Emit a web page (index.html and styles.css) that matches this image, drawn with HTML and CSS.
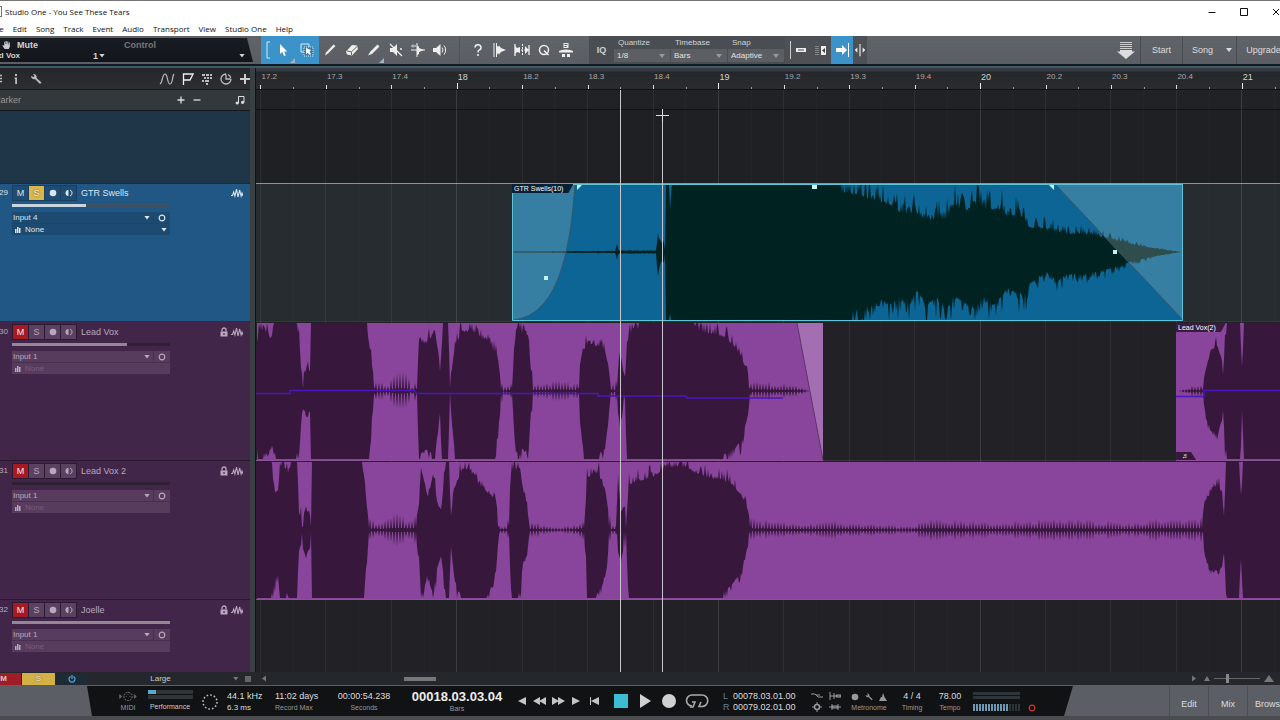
FILE: index.html
```html
<!DOCTYPE html>
<html lang="en">
<head>
    <meta charset="UTF-8">
    <meta name="viewport" content="width=device-width, initial-scale=1.0">
    <title>Studio One - You See These Tears</title>
    <link rel="stylesheet" href="styles.css">
</head>
<body>

    <!-- Shared icons -->
    <svg class="sprite" aria-hidden="true">
        <symbol id="wave" viewBox="0 0 12 10"><path d="M0 7.500h1.500L2.700 4l1.200 4L5.500 1 7 9l1.700-7 1.400 6 .9-3 1 3" fill="none" stroke="currentColor" stroke-width="1.100"/></symbol>
        <symbol id="lock" viewBox="0 0 8 10"><path d="M2 4.500V3a2 2 0 0 1 4 0v1.500" fill="none" stroke="currentColor" stroke-width="1.300"/><path d="M.5 4.500h7V9.500h-7zM3.400 6v2h1.200V6z" fill="currentColor" fill-rule="evenodd"/></symbol>
        <symbol id="dot" viewBox="0 0 8 8"><circle cx="4" cy="4" r="3.300" fill="currentColor"/></symbol>
        <symbol id="monitor" viewBox="0 0 8 8"><path d="M3.500 1v6a3 3 0 0 1 0-6z" fill="currentColor"/><path d="M5 1a3.200 3.200 0 0 1 0 6" fill="none" stroke="currentColor"/></symbol>
        <symbol id="ring" viewBox="0 0 8 8"><circle cx="4" cy="4" r="2.800" fill="none" stroke="currentColor" stroke-width="1.200"/></symbol>
        <symbol id="keys" viewBox="0 0 6 6"><path d="M0 2h1.500v4H0zM2 0h1.500v6H2zM4 1h1.500v5H4z" fill="currentColor"/></symbol>
        <symbol id="wrench" viewBox="0 0 12 12"><path d="M1 3a3 3 0 0 0 4 3l5 5 1.500-1.500-5-4.500A3 3 0 0 0 3 1l1.500 2L3.500 4z" fill="currentColor"/></symbol>
    </svg>

    <header class="titlebar">
        <span class="app-mark"></span>
        <h1>Studio One - You See These Tears</h1>
        <div class="window-buttons">
            <button aria-label="Minimize"><svg viewBox="0 0 8 8"><path d="M0.500 4.500h7"/></svg></button>
            <button aria-label="Maximize"><svg viewBox="0 0 8 8"><path d="M.5 .5h7v7h-7z"/></svg></button>
            <button aria-label="Close"><svg viewBox="0 0 8 8"><path d="M1 1l6 6M7 1L1 7"/></svg></button>
        </div>
    </header>

    <nav class="menu">
        <a href="#">File</a>
        <a href="#">Edit</a>
        <a href="#">Song</a>
        <a href="#">Track</a>
        <a href="#">Event</a>
        <a href="#">Audio</a>
        <a href="#">Transport</a>
        <a href="#">View</a>
        <a href="#">Studio One</a>
        <a href="#">Help</a>
    </nav>

    <!-- Toolbar -->
    <div class="toolbar">
        <div class="param">
            <div class="param-row">
                <svg class="hand" viewBox="0 0 10 10"><path d="M3 9.500L.3 5.500l.9-.6L2.500 6V1.500h1V4h.5V.5h1.200V4h.6V1H7v3.500h.5V2.200h1.200V7L7.500 9.500z" fill="#ccc"/></svg>
                <b>Mute</b>
                <span class="control">Control</span>
            </div>
            <div class="param-row">
                <b class="target">Lead Vox</b>
                <b class="channel">1</b><i class="tri"></i>
                <i class="tri end"></i>
            </div>
        </div>

        <div class="tools arrow-tools">
            <svg class="bracket" viewBox="0 0 5 18"><path d="M4 1H1v16h3" fill="none" stroke="#cfe9f5"/></svg>
            <button aria-label="Arrow"><svg viewBox="0 0 16 16"><path d="M5 2v10l2.300-2 1.700 4 1.800-.8L9.200 9.500h3z" fill="#fff"/></svg></button>
            <button aria-label="Range"><svg viewBox="0 0 16 16"><path d="M2 2h8v8H2z" fill="none" stroke="#d6edf8"/><path d="M5 5h9v9H5z" fill="#3b7ba3" stroke="#d6edf8" stroke-dasharray="1 1"/><path d="M7 6v6l1.500-1L11 13l1-1.500-1.500-1.500L12 8z" fill="#fff"/></svg></button>
            <i class="corner"></i>
        </div>

        <div class="tools">
            <button aria-label="Split"><svg viewBox="0 0 16 16"><path d="M3 13.500l1-3 7.500-8 2 1.500-7.500 7.500z" fill="#eee"/></svg></button>
            <button aria-label="Eraser"><svg viewBox="0 0 16 16"><path d="M2 9.500l6-6.500 5 .5 1 3.500-6 6.500-5-1z" fill="#eee"/><path d="M3 9l4.500.8 5.500-5.300M7.500 10v3" fill="none" stroke="#666"/></svg></button>
            <button aria-label="Paint"><svg viewBox="0 0 16 16"><path d="M2 13.500l2-3.500 7.500-7.500 2 2L6 12z" fill="#eee"/></svg><i class="corner"></i></button>
            <button aria-label="Mute tool"><svg viewBox="0 0 16 16"><path d="M2 6h3l4-4v12l-4-4H2z" fill="#eee"/><path d="M2 2l12 12M12 7h2" stroke="#eee" stroke-width="1.300"/></svg></button>
            <button aria-label="Bend"><svg viewBox="0 0 16 16"><path d="M7 1v14M1 8h14M3 4h3M3 2.500L1.500 4 3 5.500" fill="none" stroke="#eee"/><path d="M7 3l2 2v1l5 2-5 2v2l-2 1z" fill="#eee"/></svg></button>
            <button aria-label="Listen"><svg viewBox="0 0 16 16"><path d="M1 6h3l4.500-4v12L4 10H1z" fill="#eee"/><path d="M10 5.500a4 4 0 0 1 0 5M12 3.500a7 7 0 0 1 0 9" fill="none" stroke="#eee"/></svg></button>
        </div>

        <div class="tools helpers">
            <button aria-label="Help"><svg viewBox="0 0 16 16"><path d="M5 5.500a3 2.800 0 1 1 4 2.600Q8 8.700 8 10.500M8 12v2" fill="none" stroke="#eee" stroke-width="1.500"/></svg></button>
            <button aria-label="Strip silence"><svg viewBox="0 0 16 16"><path d="M2 1v14M4.500 1v14" stroke="#eee"/><path d="M4 2l2 3 1-1.500 2 2.500 5 2-5 2-2 2.500L6 11l-2 3z" fill="#eee"/></svg></button>
            <button aria-label="Transient"><svg viewBox="0 0 16 16"><path d="M1 2v12M15 3v10" stroke="#eee" stroke-width="1.300"/><path d="M1 4l2 2 3-1v6l-3-1-2 2zM15 8l-4-4v8z" fill="#eee"/><path d="M8.500 2v12M1 8h14" stroke="#eee" stroke-dasharray="2 1"/></svg></button>
            <button aria-label="Quantize"><svg viewBox="0 0 16 16"><circle cx="8" cy="8" r="4.500" fill="none" stroke="#eee" stroke-width="1.500"/><path d="M8 8.500l4.500 4.500" stroke="#eee" stroke-width="1.500"/></svg></button>
            <button aria-label="Macro"><svg viewBox="0 0 16 16"><path d="M5.500 1h5v5h-5z" fill="#eee"/><path d="M6.500 2.500h3M6.500 4.500h2" stroke="#555"/><path d="M1 10.500V9a8 3 0 0 1 14 0v1.500zM4 12h3v3H4zM9 12h3v3H9z" fill="#eee"/></svg></button>
        </div>

        <div class="snap">
            <button class="iq">IQ</button>
            <div class="field">
                <label for="quantize">Quantize</label>
                <div class="pick"><select id="quantize"><option>1/8</option></select></div>
            </div>
            <div class="field">
                <label for="timebase">Timebase</label>
                <div class="pick"><select id="timebase"><option>Bars</option></select></div>
            </div>
            <div class="field">
                <label for="snapmode">Snap</label>
                <div class="pick"><select id="snapmode"><option>Adaptive</option></select></div>
            </div>
        </div>

        <div class="tools autoscroll">
            <i class="bar"></i>
            <button aria-label="Grid line"><svg viewBox="0 0 16 16"><path d="M3 6h10v4H3z" fill="#eee"/><path d="M5 8h6" stroke="#444"/></svg></button>
            <button aria-label="Ripple"><svg viewBox="0 0 16 16"><path d="M3 4v9M5 4v9" stroke="#bbb" stroke-dasharray="1 1"/><path d="M8 4h5v9H8z" fill="#eee"/><path d="M12 6v5L9 8.500z" fill="#444"/></svg></button>
            <button class="on" aria-label="Autoscroll"><svg viewBox="0 0 16 16"><path d="M2 6h6V3l5 5-5 5v-3H2z" fill="#fff"/><path d="M14.500 1v14" stroke="#fff"/></svg></button>
            <button class="slim" aria-label="Cursor follows"><svg viewBox="0 0 16 16"><path d="M8 1v14" stroke="#eee" stroke-width="1.300"/><path d="M5 5v6L2 8zM11 5v6l3-3z" fill="#eee"/></svg></button>
        </div>

        <div class="pages">
            <button class="save" aria-label="Drop"><svg viewBox="0 0 18 17"><path d="M3 .5h12M3 2.500h12M3 4.500h12M3 6.500h12" stroke="#ccc"/><path d="M3 8h12v1.500h3L9 17 0 9.500h3z" fill="#ddd"/></svg></button>
            <button class="page">Start</button>
            <button class="page song">Song<i class="tri"></i></button>
            <button class="page upgrade">Upgrade</button>
        </div>
    </div>

    <main class="arrange">
        <section class="tracklist">
            <div class="list-tools">
                <svg class="menu-icon" viewBox="0 0 10 10"><path d="M0 1.500h10M0 4.500h10M0 7.500h10" stroke="#bbb" stroke-width="1.500"/></svg>
                <svg viewBox="0 0 12 12"><path d="M5 1h2v2H5zM4.500 4.500H7V11H5.200V6h-.7z" fill="#bbb"/></svg>
                <svg viewBox="0 0 12 12" color="#bbb"><use href="#wrench"/></svg>
                <div class="views">
                    <svg class="wide" viewBox="0 0 16 12"><path d="M1 11C4 9 3 1 6 1s2 10 5 10 2-8 4-10" fill="none" stroke="#bbb" stroke-width="1.200"/></svg>
                    <svg viewBox="0 0 12 12"><path d="M1.500 12V1H11L8 7H2" fill="none" stroke="#eee" stroke-width="1.300"/></svg>
                    <svg viewBox="0 0 12 12"><path d="M1 2h3M5 2h3M9 2h2M3 5h2M6 5h2M9 5h2M1 8h2M4 8h4M5 11h2" stroke="#bbb" stroke-width="2"/></svg>
                    <svg viewBox="0 0 12 12"><path d="M6 1a5 5 0 1 0 5 5M6 1.500V6h4.500M8 1.500A5 5 0 0 1 10.800 5" fill="none" stroke="#bbb" stroke-width="1.300"/></svg>
                    <svg viewBox="0 0 12 12"><path d="M6 1v10M1 6h10" stroke="#ccc" stroke-width="2"/></svg>
                </div>
            </div>
            <div class="marker-head">
                <span>Marker</span>
                <button aria-label="Add marker"><svg viewBox="0 0 8 8"><path d="M4 .5v7M.5 4h7" stroke="#ddd" stroke-width="1.300"/></svg></button>
                <button aria-label="Remove marker"><svg viewBox="0 0 8 8"><path d="M.5 4h7" stroke="#ddd" stroke-width="1.300"/></svg></button>
                <svg class="note" viewBox="0 0 10 10"><path d="M3.500 8V1.500H9V7" fill="none" stroke="#ddd"/><circle cx="2.200" cy="8" r="1.600" fill="#ddd"/><circle cx="7.600" cy="7.300" r="1.600" fill="#ddd"/></svg>
            </div>

            <div class="track-tail"></div>

            <article class="track blue">
                <span class="num">29</span>
                <div class="body">
                    <div class="head">
                        <div class="switches">
                            <button>M</button><button class="solo">S</button><button aria-label="Record"><svg viewBox="0 0 8 8"><use href="#dot"/></svg></button><button aria-label="Monitor"><svg viewBox="0 0 8 8"><use href="#monitor"/></svg></button>
                        </div>
                        <h2>GTR Swells</h2>
                        <svg class="wave-icon" viewBox="0 0 12 10"><use href="#wave"/></svg>
                    </div>
                    <div class="level"><i style="width: 47%"></i></div>
                    <div class="io">
                        <div class="io-row"><button class="source">Input 4<i class="tri"></i></button><button class="link" aria-label="Stereo"><svg viewBox="0 0 8 8"><use href="#ring"/></svg></button></div>
                        <button class="instrument"><svg viewBox="0 0 6 6"><use href="#keys"/></svg>None<i class="tri"></i></button>
                    </div>
                </div>
            </article>

            <article class="track purple">
                <span class="num">30</span>
                <div class="body">
                    <div class="head">
                        <div class="switches">
                            <button class="mute">M</button><button>S</button><button aria-label="Record"><svg viewBox="0 0 8 8"><use href="#dot"/></svg></button><button aria-label="Monitor"><svg viewBox="0 0 8 8"><use href="#monitor"/></svg></button>
                        </div>
                        <h2>Lead Vox</h2>
                        <svg class="lock-icon" viewBox="0 0 8 10"><use href="#lock"/></svg>
                        <svg class="wave-icon" viewBox="0 0 12 10"><use href="#wave"/></svg>
                    </div>
                    <div class="level"><i style="width: 73%"></i></div>
                    <div class="io">
                        <div class="io-row"><button class="source">Input 1<i class="tri"></i></button><button class="link" aria-label="Stereo"><svg viewBox="0 0 8 8"><use href="#ring"/></svg></button></div>
                        <button class="instrument"><svg viewBox="0 0 6 6"><use href="#keys"/></svg><span>None</span></button>
                    </div>
                </div>
            </article>

            <article class="track purple">
                <span class="num">31</span>
                <div class="body">
                    <div class="head">
                        <div class="switches">
                            <button class="mute">M</button><button>S</button><button aria-label="Record"><svg viewBox="0 0 8 8"><use href="#dot"/></svg></button><button aria-label="Monitor"><svg viewBox="0 0 8 8"><use href="#monitor"/></svg></button>
                        </div>
                        <h2>Lead Vox 2</h2>
                        <svg class="lock-icon" viewBox="0 0 8 10"><use href="#lock"/></svg>
                        <svg class="wave-icon" viewBox="0 0 12 10"><use href="#wave"/></svg>
                    </div>
                    <div class="level"><i style="width: 0%"></i></div>
                    <div class="io">
                        <div class="io-row"><button class="source">Input 1<i class="tri"></i></button><button class="link" aria-label="Stereo"><svg viewBox="0 0 8 8"><use href="#ring"/></svg></button></div>
                        <button class="instrument"><svg viewBox="0 0 6 6"><use href="#keys"/></svg><span>None</span></button>
                    </div>
                </div>
            </article>

            <article class="track purple">
                <span class="num">32</span>
                <div class="body">
                    <div class="head">
                        <div class="switches">
                            <button class="mute">M</button><button>S</button><button aria-label="Record"><svg viewBox="0 0 8 8"><use href="#dot"/></svg></button><button aria-label="Monitor"><svg viewBox="0 0 8 8"><use href="#monitor"/></svg></button>
                        </div>
                        <h2>Joelle</h2>
                        <svg class="lock-icon" viewBox="0 0 8 10"><use href="#lock"/></svg>
                        <svg class="wave-icon" viewBox="0 0 12 10"><use href="#wave"/></svg>
                    </div>
                    <div class="level"><i style="width: 100%"></i></div>
                    <div class="io">
                        <div class="io-row"><button class="source">Input 1<i class="tri"></i></button><button class="link" aria-label="Stereo"><svg viewBox="0 0 8 8"><use href="#ring"/></svg></button></div>
                        <button class="instrument"><svg viewBox="0 0 6 6"><use href="#keys"/></svg><span>None</span></button>
                    </div>
                </div>
            </article>
        </section>

        <div class="splitter"></div>

        <section class="timeline">
            <div class="ruler" id="ruler"></div>
            <div class="marker-lane"></div>
            <div class="lanes">
                <div class="lane tail-lane"></div>
                <div class="lane active"></div>
                <div class="lane"></div>
                <div class="lane"></div>
                <div class="lane"></div>
            </div>
            <svg class="grid" id="grid" viewBox="0 0 1024 582" preserveAspectRatio="none"></svg>
            <svg class="clips" id="clips" viewBox="0 0 1024 488" preserveAspectRatio="none"></svg>
            <span class="clip-name gtr">GTR Swells(10)</span>
            <span class="clip-name vox">Lead Vox(2)</span>
            <span class="clip-tag">♬</span>
            <i class="playhead"></i>
            <i class="cursor-line"></i>
            <i class="crosshair"></i>
        </section>
    </main>

    <div class="bottom-bar">
        <button class="all-mute">M</button>
        <button class="all-solo">S</button>
        <button class="power" aria-label="Power"><svg viewBox="0 0 8 8"><path d="M2.500 1.500a3 3 0 1 0 3 0M4 0v4" fill="none" stroke="#4aa3dc" stroke-width="1.300"/></svg></button>
        <button class="size">Large<i class="tri"></i></button>
        <i class="list-icon"></i>
        <div class="scroll"><i class="tri left"></i><i class="thumb"></i><i class="tri right"></i></div>
        <div class="zoom"><i class="tri up small"></i><input type="range" aria-label="Zoom" value="28"><i class="tri up"></i></div>
    </div>

    <!-- Transport -->
    <footer class="transport">
        <div class="transport-main">
            <div class="cell midi"><svg viewBox="0 0 20 12"><circle cx="10" cy="6" r="4.500" fill="none" stroke="#888" stroke-dasharray="2 1"/><path d="M7.500 6h1M11.500 6h1M10 3.500v1M1 4v4l2-2zM17 4v4l2-2z" fill="#666" stroke="#666"/></svg><small>MIDI</small></div>
            <div class="cell perf"><div class="meter"><i style="width: 19%"></i></div><div class="meter"></div><small>Performance</small></div>
            <div class="cell dots"><svg viewBox="0 0 18 18"><circle cx="9" cy="9" r="7" fill="none" stroke="#bbb" stroke-width="1.600" stroke-dasharray="1.600 2.065"/></svg></div>
            <div class="cell rate"><span>44.1 kHz</span><span class="sub">6.3 ms</span></div>
            <div class="cell recmax"><span>11:02 days</span><small>Record Max</small></div>
            <div class="cell secs"><span>00:00:54.238</span><small>Seconds</small></div>
            <div class="cell bars"><strong>00018.03.03.04</strong><small>Bars</small></div>
            <div class="nav-keys">
                <button aria-label="Previous bar"><svg viewBox="0 0 14 10"><path d="M11 1v8L3 5z"/></svg></button>
                <button aria-label="Rewind"><svg viewBox="0 0 14 10"><path d="M7 1v8L0 5zM13 1v8L6 5z"/></svg></button>
                <button aria-label="Fast forward"><svg viewBox="0 0 14 10"><path d="M1 1v8l7-4zM7 1v8l7-4z"/></svg></button>
                <button aria-label="Next bar"><svg viewBox="0 0 14 10"><path d="M3 1v8l8-4z"/></svg></button>
                <button aria-label="Return to zero"><svg viewBox="0 0 14 10"><path d="M3 1h1v8H3zM12 1v8L4 5z"/></svg></button>
            </div>
            <div class="play-keys">
                <button aria-label="Stop"><i class="stop"></i></button>
                <button aria-label="Play"><svg viewBox="0 0 14 16"><path d="M2 1v14l11-7z"/></svg></button>
                <button aria-label="Record"><svg viewBox="0 0 16 16"><circle cx="8" cy="8" r="7"/></svg></button>
                <button class="loop" aria-label="Loop"><svg viewBox="0 0 24 16"><path d="M5 14h3l2-5H7M7 13A5.500 5.500 0 0 1 7 2h10a5.500 5.500 0 0 1 0 11.500h-3l2-4.500" fill="none" stroke="#aaa" stroke-width="1.600"/></svg></button>
            </div>
            <div class="locators">
                <span><b>L</b>00078.03.01.00</span>
                <span><b>R</b>00079.02.01.00</span>
            </div>
            <div class="punch">
                <svg viewBox="0 0 12 10"><path d="M0 3h4l3 3h5M5 4h4" /></svg>
                <svg viewBox="0 0 12 10"><path d="M1 1v8M1 5h11M5 2v6M7 4h5v2H7z"/></svg>
                <svg viewBox="0 0 12 10"><circle cx="6" cy="5" r="2.500" stroke-width="1.500"/><path d="M6 0v2M6 8v2M1 5h2M9 5h2"/></svg>
                <svg viewBox="0 0 12 10"><path d="M0 5h12M3 2v6M9 2v6M3 4h6v2H3z"/></svg>
            </div>
            <div class="cell metro">
                <div class="metro-icons"><svg viewBox="0 0 8 8"><use href="#dot"/></svg><svg viewBox="0 0 12 12"><use href="#wrench"/></svg><svg viewBox="0 0 8 8"><path d="M0 8l2-4h1L4 0l1.500 4L8 8z" fill="currentColor"/></svg></div>
                <small>Metronome</small>
            </div>
            <div class="cell timing"><span>4 / 4</span><small>Timing</small></div>
            <div class="cell tempo"><span>78.00</span><small>Tempo</small></div>
            <div class="cell out"><div class="meter"></div><div class="meter"></div><div class="segments"></div></div>
            <svg class="clip-light" viewBox="0 0 8 8"><use href="#ring"/></svg>
        </div>
        <div class="views-nav">
            <button>Edit</button>
            <button>Mix</button>
            <button class="browse">Browse</button>
        </div>
    </footer>

    <script src="script.js"></script>
</body>
</html>
```

FILE: styles.css
```css
* {
    box-sizing: border-box;
}

body {
    margin: 0;
    height: 100vh;
    display: flex;
    flex-direction: column;
    overflow: hidden;
    background-color: #1f2024;
    color: #d0d2d4;
    font-family: "Liberation Sans", Arial, sans-serif;
    font-size: 9px;
    line-height: 12px;
}

button,
select {
    font: inherit;
    color: inherit;
    background: none;
    border: none;
    border-radius: 0;
    padding: 0;
    margin: 0;
    appearance: none;
}

button {
    display: flex;
    align-items: center;
    justify-content: center;
}

svg {
    display: block;
    flex-shrink: 0;
}

.sprite {
    position: absolute;
    width: 0;
    height: 0;
}

/* Small triangle used by every drop-down */
.tri {
    width: 6px;
    height: 4px;
    flex-shrink: 0;
    background-color: currentColor;
    clip-path: polygon(0 0, 100% 0, 50% 100%);
}

.tri.left {
    width: 4px;
    height: 6px;
    clip-path: polygon(100% 0, 100% 100%, 0 50%);
}

.tri.right {
    width: 4px;
    height: 6px;
    clip-path: polygon(0 0, 100% 50%, 0 100%);
}

.tri.up {
    width: 10px;
    height: 7px;
    clip-path: polygon(50% 0, 100% 100%, 0 100%);
}

.tri.up.small {
    width: 6px;
    height: 5px;
}

/* Title bar and menu */
.titlebar {
    display: flex;
    align-items: center;
    height: 22px;
    flex-shrink: 0;
    background-color: #fff;
    border-top: 1px solid #777;
    color: #111;
}

.app-mark {
    width: 2px;
    height: 11px;
    margin-right: 3px;
    border: 1px solid #777;
    border-left: none;
}

.titlebar h1 {
    margin: 0;
    font: 8px/14px "Open Sans", sans-serif;
}

.window-buttons {
    display: flex;
    margin-left: auto;
    margin-right: -12px;
}

.window-buttons button {
    width: 32px;
    height: 20px;
}

.window-buttons svg {
    width: 8px;
    height: 8px;
    fill: none;
    stroke: #111;
}

.menu {
    display: flex;
    gap: 9px;
    height: 14px;
    flex-shrink: 0;
    margin-left: -9px;
    padding-bottom: 1px;
    background-color: #fff;
    font: 8px/13px "Open Sans", sans-serif;
}

.menu a {
    color: #111;
    text-decoration: none;
}

/* Toolbar */
.toolbar {
    display: flex;
    height: 32px;
    flex-shrink: 0;
    background: linear-gradient(#606368, #5a5e64);
    border-bottom: 2px solid #3a5a68;
    box-shadow: inset 0 -2px #16191d;
    padding-bottom: 2px;
}

.param {
    width: 253px;
    margin-right: 8px;
    height: 24px;
    margin-top: 2px;
    padding: 1px 8px 0 0;
    background: linear-gradient(#191c22, #12151a);
    clip-path: polygon(0 0, 247px 0, 100% 100%, 0 100%);
}

.param-row {
    display: flex;
    align-items: center;
    height: 11px;
}

.hand {
    width: 9px;
    height: 10px;
    margin: 0 6px 0 2px;
}

.control {
    margin-left: 86px;
    font-weight: bold;
    color: #777;
}

.target {
    width: 104px;
    margin-left: -15px;
    font-size: 8px;
}

.channel {
    width: 6px;
    margin-left: 4px;
}

.tri.end {
    margin-left: auto;
}

.tools {
    display: flex;
    position: relative;
}

.tools button {
    width: 22px;
    position: relative;
}

.tools button svg {
    width: 16px;
    height: 16px;
}

.arrow-tools {
    background-color: #3b93ca;
    padding: 0 0 0 5px;
    align-items: center;
}

.arrow-tools button {
    width: 24px;
}

.bracket {
    width: 5px;
    height: 18px;
}

.corner {
    position: absolute;
    right: 1px;
    bottom: 1px;
    width: 5px;
    height: 5px;
    background-color: #9fb4c0;
    clip-path: polygon(100% 0, 100% 100%, 0 100%);
}

.arrow-tools .corner {
    right: 24px;
}

.helpers {
    margin-left: 8px;
    padding: 0 12px 0 7px;
    border-left: 1px solid #505358;
}

.snap {
    display: flex;
    background-color: #4a4d51;
    font-size: 8px;
}

.iq {
    width: 25px;
    font-size: 9px;
    font-weight: bold;
}

.field {
    width: 56px;
    margin-right: 1px;
    padding-top: 1px;
}

.field label {
    display: block;
    padding-left: 4px;
}

.pick {
    position: relative;
    background-color: #5b5e62;
    height: 13px;
    padding-left: 3px;
}

.pick select {
    width: 100%;
    height: 13px;
    color: #e4e4e4;
}

.pick::after {
    content: "";
    position: absolute;
    right: 5px;
    top: 5px;
    width: 6px;
    height: 4px;
    background-color: #999;
    clip-path: polygon(0 0, 100% 0, 50% 100%);
}

.autoscroll {
    background-color: #4d5054;
    padding-left: 5px;
}

.autoscroll .bar {
    width: 1px;
    margin: 5px 0;
    background-color: #ccc;
}

.autoscroll button {
    width: 20px;
}

.autoscroll .on {
    width: 22px;
    background-color: #3b93ca;
}

.autoscroll .slim {
    width: 14px;
}

.autoscroll .slim svg {
    width: 14px;
}

.pages {
    display: flex;
    margin-left: auto;
    margin-right: -10px;
}

.pages button {
    color: #ddd;
}

.save {
    width: 28px;
}

.save svg {
    width: 18px;
    height: 17px;
}

.page {
    border-left: 1px solid #484b50;
    width: 42px;
}

.page.song {
    width: 54px;
    gap: 13px;
    padding-left: 5px;
}

.page.upgrade {
    width: 54px;
}

/* Arrangement */
.arrange {
    display: grid;
    grid-template-columns: 250px 6px 1fr;
    flex: 1;
    min-height: 0;
    overflow: hidden;
}

.tracklist {
    overflow: hidden;
}

.splitter {
    background-color: #394044;
    border-right: 1px solid #121316;
}

.list-tools {
    display: flex;
    align-items: center;
    gap: 8px;
    height: 22px;
    background: linear-gradient(#24262a, #2c2e32);
    border-bottom: 1px solid #15171a;
}

.list-tools svg {
    width: 12px;
    height: 12px;
}

.list-tools .menu-icon {
    width: 10px;
    margin-left: -8px;
}

.views {
    display: flex;
    gap: 7px;
    margin-left: auto;
    margin-right: -1px;
}

.list-tools .wide {
    width: 16px;
}

.marker-head {
    display: flex;
    align-items: center;
    height: 20px;
    gap: 8px;
    background-color: #33383c;
    color: #999;
    padding-right: 5px;
}

.marker-head span {
    margin-left: -7px;
    margin-right: auto;
}

.marker-head svg {
    width: 8px;
    height: 8px;
}

.marker-head .note {
    width: 10px;
    height: 10px;
    margin-left: 26px;
}

.track-tail {
    height: 74px;
    background-color: #1f3548;
    border-top: 1px solid #16191c;
    border-bottom: 1px solid #1a2a3a;
}

.track {
    display: flex;
    gap: 4px;
    height: 139px;
    padding-top: 2px;
    border-bottom: 1px solid #241a2b;
}

.blue {
    height: 138px;
    padding-top: 1px;
    background-color: #215784;
    color: #dce6ee;
    border-bottom-color: #1b3550;
}

.purple {
    background-color: #42264a;
    color: #b9a8bd;
}

.num {
    width: 8px;
    padding-top: 2px;
    display: flex;
    justify-content: flex-end;
    font-size: 8px;
}

.body {
    flex: 1;
}

.head {
    display: flex;
    align-items: center;
    padding-right: 7px;
    gap: 3px;
}

.head h2 {
    margin: 0 auto 0 1px;
    font-size: 9px;
    font-weight: normal;
}

.switches {
    display: flex;
    gap: 1px;
    padding: 1px;
    background-color: #1b3f60;
}

.switches button {
    width: 15px;
    height: 14px;
    background-color: #1f4c73;
    font-size: 9px;
}

.purple .switches {
    background-color: #2c1a33;
}

.purple .switches button {
    background-color: #5b4161;
}

.purple .switches .mute {
    background-color: #a71a24;
    color: #eee;
}

.switches .solo {
    background-color: #dcb64a;
    color: #f8f0da;
    text-shadow: 0 0 2px #5a4410;
}

.switches svg {
    width: 8px;
    height: 8px;
}

.lock-icon {
    width: 8px;
    height: 10px;
}

.wave-icon {
    width: 12px;
    height: 10px;
}

.level {
    width: 158px;
    height: 3px;
    margin: 3px 0 5px;
    background-color: #3c5163;
}

.level i {
    display: block;
    height: 3px;
    background-color: #c9d6e0;
}

.purple .level {
    background-color: #2d2132;
}

.purple .level i {
    background-color: #938796;
}

.io {
    width: 158px;
    background-color: #1d4a70;
}

.purple .io {
    background-color: #583c5e;
}

.io-row {
    display: flex;
    border-bottom: 1px solid #1f4467;
}

.purple .io-row {
    border-color: #492f50;
}

.io button {
    height: 11px;
    font-size: 8px;
    justify-content: flex-start;
}

.io .source {
    flex: 1;
    padding: 0 3px 0 1px;
    justify-content: space-between;
    border-right: 1px solid #1f4467;
}

.io .link {
    width: 16px;
    justify-content: center;
}

.purple .io .source {
    border-color: #492f50;
}

.link svg {
    width: 8px;
    height: 8px;
}

.io .instrument {
    width: 100%;
    padding: 0 3px;
    gap: 4px;
}

.instrument svg {
    width: 6px;
    height: 6px;
}

.instrument .tri {
    margin-left: auto;
}

.purple .instrument span {
    color: #765d7c;
}

/* Timeline */
.timeline {
    position: relative;
    overflow: hidden;
}

.ruler {
    position: relative;
    height: 22px;
    background: linear-gradient(#363a42 0, #363a42 3px, #25272b 4px, #2a2c30 100%);
    border-bottom: 1px solid #101113;
}

.ruler span {
    position: absolute;
    top: 3px;
    padding-left: 1px;
    font-size: 8px;
    color: #a6a8aa;
}

.ruler .bar-label {
    font-size: 9px;
    color: #d0d2d4;
}

.ruler i {
    position: absolute;
    bottom: 0;
    width: 1px;
    height: 2px;
    background-color: #999;
}

.ruler .beat-tick {
    height: 4px;
    background-color: #ddd;
}

.ruler .bar-tick {
    height: 6px;
    background-color: #eee;
}

.marker-lane {
    height: 20px;
    background-color: #202226;
    border-bottom: 1px solid #121214;
}

.lane {
    height: 139px;
    background-color: #222125;
    border-bottom: 1px solid #3a333e;
}

.tail-lane {
    height: 74px;
    background-color: #1f2024;
    border-bottom: 1px solid #8b9494;
}

.lane.active {
    height: 138px;
    background-color: #272c30;
}

.grid {
    position: absolute;
    left: 0;
    top: 22px;
    width: 100%;
    height: 582px;
}

.clips {
    position: absolute;
    left: 0;
    top: 115px;
    width: 100%;
    height: 488px;
}

.clip-name {
    position: absolute;
    height: 9px;
    padding: 0 10px 0 2px;
    font-size: 7px;
    line-height: 9px;
    color: #fff;
    clip-path: polygon(0 0, 100% 0, calc(100% - 5px) 100%, 0 100%);
}

.clip-name.gtr {
    left: 25%;
    top: 116px;
    background-color: #062038;
}

.clip-name.vox {
    left: 89.85%;
    top: 255px;
    background-color: #3a1b3f;
}

.clip-tag {
    position: absolute;
    left: 89.85%;
    top: 384px;
    width: 20px;
    height: 8px;
    padding-left: 6px;
    font-size: 7px;
    line-height: 8px;
    color: #fff;
    background-color: #38183d;
    clip-path: polygon(0 0, 75% 0, 100% 100%, 0 100%);
}

.playhead,
.cursor-line {
    position: absolute;
    bottom: 0;
    width: 1px;
    background-color: #c9c5cc;
}

.playhead {
    left: 35.55%;
    top: 22px;
}

.cursor-line {
    left: 39.65%;
    top: 47px;
}

.crosshair {
    position: absolute;
    left: 39.65%;
    top: 41px;
    width: 13px;
    height: 13px;
    margin-left: -6px;
    background: linear-gradient(#ddd, #ddd) center / 13px 1px no-repeat, linear-gradient(#ddd, #ddd) center / 1px 13px no-repeat;
}

/* Bar under the tracks */
.bottom-bar {
    display: flex;
    align-items: center;
    height: 14px;
    flex-shrink: 0;
    background-color: #24272b;
    border-bottom: 1px solid #4b6478;
    font-size: 8px;
    color: #ccc;
}

.bottom-bar button {
    height: 12px;
}

.all-mute {
    width: 21px;
    padding-right: 14px;
    background-color: #a01c26;
    font-weight: bold;
}

.bottom-bar .all-solo {
    width: 33px;
    margin-left: 1px;
    background-color: #d3b146;
    color: #f8f0da;
    text-shadow: 0 0 2px #5a4410;
}

.power {
    width: 33px;
    background-color: #1e2a34;
}

.power svg {
    width: 8px;
    height: 8px;
}

.bottom-bar .size {
    width: 151px;
    padding-left: 62px;
    gap: 62px;
}

.list-icon {
    width: 6px;
    height: 6px;
    margin: 0 11px 0 6px;
    background-color: #666;
}

.bottom-bar .tri {
    background-color: #777;
}

.scroll {
    display: flex;
    align-items: center;
    flex: 1;
}

.thumb {
    width: 32px;
    height: 4px;
    margin-left: 138px;
    margin-right: auto;
    background-color: #777;
}

.zoom {
    display: flex;
    align-items: center;
    gap: 4px;
    padding: 0 6px 0 8px;
}

.zoom input {
    width: 46px;
    height: 10px;
    margin: 0;
    appearance: none;
    background: linear-gradient(#666, #666) center / 100% 1px no-repeat;
}

.zoom input::-webkit-slider-thumb {
    appearance: none;
    width: 3px;
    height: 9px;
    background-color: #888;
}

/* Transport */
.transport {
    display: flex;
    height: 34px;
    flex-shrink: 0;
    background-color: #5b5f65;
    border-bottom: 4px solid #4a4c50;
    padding-left: 87px;
}

.transport-main {
    display: flex;
    align-items: center;
    gap: 8px;
    flex: 0 1 986px;
    padding: 0 36px 0 30px;
    background-color: #111214;
    clip-path: polygon(0 0, 100% 0, calc(100% - 9px) 100%, 5px 100%);
}

.cell {
    display: flex;
    flex-direction: column;
    align-items: center;
    flex-shrink: 0;
    padding-top: 2px;
    white-space: nowrap;
    color: #ddd;
    line-height: 11px;
}

.cell small {
    font-size: 7px;
    line-height: 11px;
    color: #999;
}

.midi {
    width: 22px;
}

.midi svg {
    width: 20px;
    height: 11px;
}

.meter {
    width: 45px;
    height: 4px;
    margin-bottom: 1px;
    background-color: #2f3438;
}

.meter i {
    display: block;
    height: 4px;
    background-color: #5aa9d0;
}

.perf {
    width: 46px;
    padding-top: 0;
}

.perf small {
    color: #ccc;
    margin-top: 1px;
}

.dots svg {
    width: 18px;
    height: 18px;
}

.rate {
    width: 40px;
    align-items: flex-start;
}

.rate .sub {
    font-size: 8px;
}

.recmax {
    width: 44px;
    align-items: flex-start;
}

.secs {
    width: 74px;
}

.bars {
    width: 96px;
}

.bars strong {
    font-size: 13px;
    line-height: 12px;
    color: #eee;
}

.nav-keys,
.play-keys {
    display: flex;
    align-items: center;
}

.nav-keys button {
    width: 18px;
    height: 16px;
}

.nav-keys svg {
    width: 14px;
    height: 10px;
    fill: #c4c4c4;
}

.play-keys {
    gap: 4px;
}

.play-keys button {
    width: 20px;
    height: 20px;
}

.play-keys svg {
    width: 16px;
    height: 16px;
    fill: #d0d0d0;
}

.stop {
    width: 14px;
    height: 14px;
    background-color: #3cbdd4;
}

.play-keys .loop {
    width: 28px;
}

.play-keys .loop svg {
    width: 24px;
}

.locators {
    width: 80px;
    padding: 2px 0 0 4px;
    display: flex;
    flex-direction: column;
    line-height: 11px;
    color: #ddd;
    white-space: nowrap;
}

.locators b {
    display: inline-block;
    width: 10px;
    font-weight: normal;
    color: #5f7f9c;
}

.punch {
    display: grid;
    grid-template-columns: 12px 12px;
    gap: 1px 6px;
    padding-left: 4px;
}

.punch svg {
    width: 12px;
    height: 10px;
    fill: none;
    stroke: #999;
}

.metro {
    width: 40px;
}

.metro-icons {
    display: flex;
    gap: 6px;
    height: 11px;
    align-items: center;
    color: #999;
}

.metro-icons svg {
    width: 8px;
    height: 8px;
}

.timing {
    width: 30px;
}

.tempo {
    width: 30px;
}

.out {
    width: 47px;
    padding-top: 0;
}

.out .meter {
    width: 47px;
    height: 3px;
}

.segments {
    width: 47px;
    height: 7px;
    margin-top: 4px;
    background: repeating-linear-gradient(90deg, transparent 0, transparent 2px, #111214 2px, #111214 3px), linear-gradient(90deg, #6d9ab2 36px, #2f3438 36px);
}

.clip-light {
    width: 8px;
    height: 8px;
    color: #d4372c;
    align-self: flex-end;
    margin-bottom: 4px;
}

.views-nav {
    display: flex;
    margin-left: auto;
    margin-right: -8px;
    color: #ddd;
}

.views-nav button {
    width: 39px;
    border-left: 1px solid #4b4f55;
    padding-top: 6px;
}

.views-nav .browse {
    width: 41px;
    padding-left: 4px;
}
```

FILE: script.js
```js
const WIDTH = 1024;
const BEAT = 65.42;
const FIRST = 4.5;

// Ruler and grid
const ruler = document.getElementById("ruler");
let gridLines = "";

for (let n = 0; FIRST + n * BEAT / 2 < WIDTH; n++) {
    const x = FIRST + n * BEAT / 2;
    const left = (x / WIDTH * 100) + "%";
    const tick = document.createElement("i");
    tick.style.left = left;

    if (n % 2 === 0) {
        const beat = n / 2 + 1;
        const isBar = beat % 4 === 0;
        const label = document.createElement("span");
        label.textContent = 17 + Math.floor(beat / 4) + (isBar ? "" : "." + (beat % 4 + 1));
        label.style.left = left;
        tick.className = "beat-tick";
        if (isBar) {
            label.className = "bar-label";
            tick.className = "bar-tick";
        }
        ruler.appendChild(label);
    }
    ruler.appendChild(tick);
    const opacity = n % 8 === 6 ? 0.12 : n % 2 === 0 ? 0.06 : 0.02;
    gridLines += `<path d="M${Math.floor(x) + 0.5} 0V582" stroke="#fff" stroke-opacity="${opacity}"/>`;
}
document.getElementById("grid").innerHTML = gridLines;

// Envelopes: x, upper level, lower level
const lead1 = [
    0,.65,.77, 3,.97,1, 12,.9,.95, 16,.75,.85, 20,1,1, 40,1,1, 43,.85,.9, 45,.35,.45, 47,.14,.25, 51,.4,.35, 54,.3,.3, 55,1,1,
    110,1,1, 113,.75,1, 116,.4,.4, 118,.2,.2, 120,.08,.08, 133,.06,.06, 140,.15,.15, 150,.15,.14, 156,.05,.05, 161,.15,.2,
    163,.78,1, 170,.72,.9, 179,.93,1, 182,.6,.6, 184,.3,.35, 186,.75,.9, 188,1,1, 192,1,1, 194,.2,.1, 196,.35,.5, 199,.7,1,
    206,.92,1, 215,.93,1, 222,.88,1, 233,.68,1, 239,.6,1, 242,.5,.6, 245,.12,.2, 247,.03,.03, 255,.06,.06, 257,.3,.3,
    260,.95,.9, 263,1,1, 267,.87,.85, 272,.87,.95, 275,.3,.3, 277,.06,.06, 290,.06,.06, 300,.1,.1, 320,.06,.06, 323,.2,.2,
    325,.5,.6, 328,.63,1, 332,.75,1, 340,.7,1, 349,.63,.9, 352,.4,.5, 354,.1,.1, 359,.04,.04, 362,.3,.3, 364,.6,.55,
    366,.4,.35, 369,.15,.1, 371,.75,1, 376,.93,1, 385,1,1, 434,1,1, 450,.9,1, 459,.88,1, 470,.82,.97, 479,.68,.88,
    486,.5,.75, 491,.3,.4, 495,.08,.06, 510,.08,.08, 530,.06,.06, 545,.04,.04, 553,0,0
];
const lead2 = [
    0,1,1, 14,1,1, 17,.8,.95, 19,.58,.75, 22,.62,.7, 24,.97,1, 28,1,1, 31,.85,.97, 35,1,1, 41,1,1, 43,.25,.3, 46,.18,.2,
    50,.3,.4, 55,.2,.2, 56,1,1, 106,1,1, 108,.8,1, 111,.35,.4, 113,.1,.08, 125,.06,.06, 140,.13,.13, 155,.1,.1, 160,.15,.15,
    163,.4,.4, 165,.95,1, 168,.75,.9, 172,.5,.65, 177,.85,1, 181,.45,.6, 185,.25,.4, 188,.8,.75, 190,1,1, 193,1,1, 195,.2,.25,
    198,.65,.7, 202,.75,.95, 206,.95,1, 213,.95,1, 222,.72,1, 230,.6,1, 238,.5,.8, 241,.3,.4, 243,.05,.06, 250,.03,.03,
    253,.2,.15, 255,.85,.9, 258,.93,1, 264,.97,.95, 267,.6,.5, 271,.4,.4, 273,.08,.08, 285,.05,.05, 305,.02,.02, 320,.05,.05,
    328,.12,.15, 330,.4,.4, 331,.8,1, 340,.9,1, 345,.78,.88, 350,.55,.65, 353,.2,.15, 355,.05,.05, 360,.05,.05, 362,.8,.3,
    365,.3,.5, 368,.3,.2, 370,.1,.1, 373,.7,1, 380,.75,1, 395,.8,1, 410,.97,1, 430,.97,1, 444,.85,1, 455,.8,1, 465,.78,1,
    476,.7,.85, 485,.55,.65, 490,.4,.35, 495,.1,.08, 540,.05,.05, 580,.07,.07, 655,.03,.03, 675,.1,.1, 740,.06,.06,
    800,.1,.1, 870,.06,.06, 910,.1,.1, 946,.1,.1, 948,.35,.3, 952,.5,.5, 957,.66,.6, 963,.68,.65, 966,.5,.55, 968,.22,.3,
    970,.9,.9, 971,1,1, 983,1,1, 985,.45,.4, 987,1,1, 1024,1,1
];
const lead3 = [
    922,0,0, 930,.02,.02, 934,.04,.04, 945,.05,.05, 947,.1,.1, 950,.35,.4, 955,.62,.6, 962,.68,.68, 966,.45,.4, 967,.25,.3,
    969,.7,.8, 971,1,1, 984,1,1, 986,.35,.3, 988,1,1, 1024,1,1
];
const swells = [
    256,.005,.005, 310,.01,.01, 359,.015,.015, 361,.12,.08, 363,.02,.02, 400,.02,.02, 402,.25,.35, 405,.15,.15, 408,.15,.15,
    409,.02,.02, 410,1,1, 413,1,1, 414,.7,.7, 416,1,1, 570,1,1, 594,.97,.98, 612,.88,.87, 625,.82,.78, 634,.78,.85, 644,.65,.72,
    651,.62,.82, 661,.62,.62, 671,.52,.85, 681,.55,.75, 690,.53,.95, 698,.78,.7, 707,.66,.8, 719,.76,.9, 727,.7,.72,
    737,.7,.85, 744,.7,.75, 751,.6,.6, 761,.6,.65, 768,.55,.7, 774,.37,.5, 781,.42,.42, 791,.36,.32, 801,.34,.48,
    811,.28,.36, 824,.3,.36, 841,.26,.32, 861,.18,.24, 874,.13,.16, 894,.07,.08, 924,0,0
];

let seed = 7;
function random() {
    seed = (seed * 16807) % 2147483647;
    return seed / 2147483647;
}

// Builds the closed outline of a waveform around its centre line.
// Quiet parts of a voice are drawn as separate thin spikes.
function wavePath(points, centre, height, rough, voice) {
    const top = [];
    const bottom = [];
    for (let i = 0; i < points.length - 3; i += 3) {
        const [x1, a1, b1, x2, a2, b2] = points.slice(i, i + 6);
        for (let x = x1; x < x2; x++) {
            const t = (x - x1) / (x2 - x1);
            const spike = x % 3 === 0 ? 1 + random() * 0.9 : 0.25;
            const shape = level => {
                if (level > 0.98) {
                    return height;
                }
                let noise = 1 - rough * 0.4 + Math.pow(random(), 3) * rough * 2;
                if (voice && level < 0.22) {
                    noise = spike;
                }
                return Math.min(1, level * noise) * height;
            };
            top.push(`${x} ${(centre - shape(a1 + (a2 - a1) * t)).toFixed(1)}`);
            bottom.unshift(`${x} ${(centre + shape(b1 + (b2 - b1) * t)).toFixed(1)}`);
        }
    }
    const end = points[points.length - 3];
    return `M${top.join("L")}L${end} ${centre - points[points.length - 2] * height}L${end} ${centre + points[points.length - 1] * height}L${bottom.join("L")}Z`;
}

document.getElementById("clips").innerHTML = `
    <rect x="256" y="1" width="671" height="137" fill="#0c6594"/>
    <path d="M256 69H924" stroke="#002321" stroke-opacity=".5"/>
    <path d="${wavePath(swells, 69, 68, 0.26, false)}" fill="#002321"/>
    <path d="M256 1H319C314 70 302 132 257 137Z" fill="#b9cbcf" fill-opacity=".25"/>
    <path d="M799 1H927V137Z" fill="#b9cbcf" fill-opacity=".25"/>
    <path d="M319 1C314 70 302 132 257 137M799 1L927 137" fill="none" stroke="#35586b"/>
    <path d="M256.500 1.500H926.500V137.500H256.500Z" fill="none" stroke="#5fc4d8"/>
    <path d="M321 2h5l-5 5zM793 2h5v5zM556 2h5v4h-5zM288 93h4v4h-4zM857 67h4v4h-4z" fill="#bff5f5"/>

    <rect x="1" y="140" width="566" height="137" fill="#89449b"/>
    <path d="${wavePath(lead1, 208, 68, 0.14, true)}" fill="#37183c"/>
    <path d="M541 140H567V277Z" fill="#c09aca" fill-opacity=".5"/>
    <path d="M541 140L567 277" stroke="#5d3568" fill="none"/>
    <path d="M0 210.500H34V207.500H158L161 210.500H342V213H430L431 215H527" fill="none" stroke="#4a16b8" stroke-width="1.500"/>

    <rect x="920" y="140" width="104" height="137" fill="#89449b"/>
    <path d="${wavePath(lead3, 208, 68, 0.14, true)}" fill="#37183c"/>
    <path d="M920 213.500H948V207.500H1024" fill="none" stroke="#4a16b8" stroke-width="1.500"/>

    <rect x="1" y="279" width="1023" height="137" fill="#89449b"/>
    <path d="${wavePath(lead2, 347, 68, 0.14, true)}" fill="#37183c"/>
    <path d="M0 277.500H567M920 277.500H1024M0 416.500H1024" stroke="#885492" fill="none"/>
`;
```
